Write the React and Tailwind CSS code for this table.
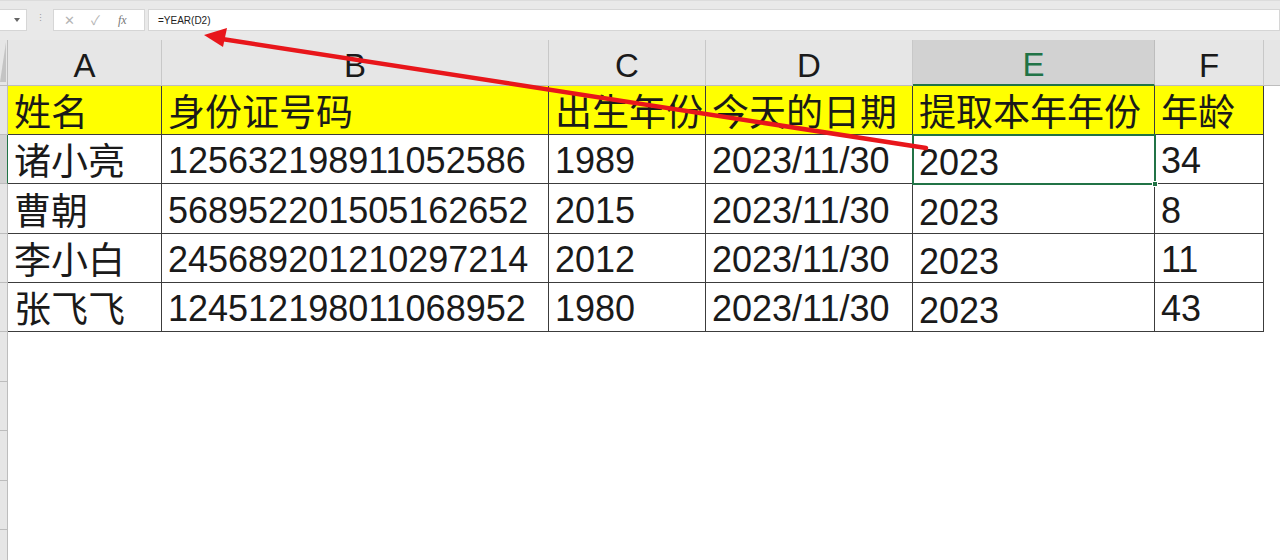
import React from "react";

const COLS = ["A", "B", "C", "D", "E", "F"];
const GRID = "grid grid-cols-[8px_154px_387px_157px_207px_242px_109px_16px]";

const header = ["姓名", "身份证号码", "出生年份", "今天的日期", "提取本年年份", "年龄"];
const rows = [
  ["诸小亮", "125632198911052586", "1989", "2023/11/30", "2023", "34"],
  ["曹朝", "568952201505162652", "2015", "2023/11/30", "2023", "8"],
  ["李小白", "245689201210297214", "2012", "2023/11/30", "2023", "11"],
  ["张飞飞", "124512198011068952", "1980", "2023/11/30", "2023", "43"],
];
const rowH = ["h-[49px]", "h-[50px]", "h-[49px]", "h-[49px]"];

function Cell({ children, cjk, className = "" }) {
  return (
    <div
      className={
        "flex items-end overflow-hidden whitespace-nowrap border-r border-b border-[#3c3c3c] pl-[6px] leading-none text-[#1a1a1a] " +
        (cjk ? "text-[37px] pb-[2px] " : "text-[36px] pb-[4px] ") +
        className
      }
    >
      {children}
    </div>
  );
}

export default function App() {
  return (
    <div className="relative h-[560px] w-[1280px] overflow-hidden bg-white font-['Liberation_Sans','Noto_Sans_CJK_SC',sans-serif]">
      {/* formula bar */}
      <div className="flex h-[40px] items-start bg-[#e9e9e9] pt-[8px] border-t border-[#dcdcdc]">
        <div className="flex h-[22px] w-[27px] items-center justify-end bg-white pr-[6px] border border-[#d6d6d6] border-l-0">
          <svg width="6" height="4" viewBox="0 0 6 4"><path d="M0 0h6L3 4z" fill="#666" /></svg>
        </div>
        <div className="flex w-[26px] justify-center pt-[5px] text-[9px] leading-none text-[#9a9a9a]">⋮</div>
        <div className="flex h-[22px] w-[92px] items-center bg-white border border-[#d6d6d6] text-[#b4b4b4]">
          <span className="ml-[10px] text-[13px] leading-none">✕</span>
          <span className="ml-[16px] text-[13px] leading-none">✓</span>
          <span className="ml-[18px] font-['Liberation_Serif',serif] italic text-[12px] leading-none text-[#777]">fx</span>
        </div>
        <div className="ml-[3px] flex h-[22px] flex-1 items-center bg-white pl-[9px] border border-[#d6d6d6] text-[10px] text-[#222]">
          =YEAR(D2)
        </div>
      </div>

      {/* column headers */}
      <div className={GRID + " h-[46px] bg-[#e6e6e6]"}>
        <div className="relative border-r border-b border-[#bdbdbd]">
          <div className="absolute left-0 top-[2px] h-[40px] w-[6px] bg-[#c4c4c4] [clip-path:polygon(100%_0,100%_100%,0_100%)]" />
        </div>
        {COLS.map((c) => (
          <div
            key={c}
            className={
              "flex items-end justify-center pb-[3px] text-[33px] leading-none border-r border-b " +
              (c === "E"
                ? "bg-[#d2d2d2] text-[#217346] border-r-[#bdbdbd] border-b-[#217346] border-b-2"
                : "text-[#1a1a1a] border-[#c8c8c8] border-b-[#bdbdbd]")
            }
          >
            {c}
          </div>
        ))}
        <div className="border-b border-[#bdbdbd]" />
      </div>

      {/* header row */}
      <div className={GRID + " h-[49px]"}>
        <div className="bg-[#e6e6e6] border-r border-b border-[#bdbdbd]" />
        {header.map((h, i) => (
          <Cell key={i} cjk className="bg-[#ffff00]">
            {h}
          </Cell>
        ))}
        <div />
      </div>

      {/* data rows */}
      {rows.map((r, ri) => (
        <div key={ri} className={GRID + " " + rowH[ri]}>
          <div
            className={
              "border-r border-b border-[#bdbdbd] " + (ri === 0 ? "bg-[#d2d2d2] border-r-[#217346]" : "bg-[#e6e6e6]")
            }
          />
          {r.map((v, ci) => (
            <Cell key={ci} cjk={ci === 0} className={ci === 4 ? "!pb-[2px]" : ""}>
              {v}
            </Cell>
          ))}
          <div />
        </div>
      ))}

      {/* empty rows */}
      {["h-[50px]", "h-[49px]", "h-[50px]", "h-[49px]", "h-[50px]"].map((h, i) => (
        <div key={i} className={GRID + " " + h}>
          <div className="bg-[#e6e6e6] border-r border-b border-[#bdbdbd]" />
        </div>
      ))}

      {/* selection */}
      <div className="pointer-events-none absolute left-[912px] top-[134px] h-[51px] w-[244px] border-2 border-[#217346]" />
      <div className="pointer-events-none absolute left-[1152px] top-[181px] h-[6px] w-[6px] bg-[#217346] border border-white" />

      {/* red arrow */}
      <svg className="pointer-events-none absolute left-0 top-0" width="1280" height="560">
        <line x1="926" y1="148" x2="222" y2="39" stroke="#e8161b" strokeWidth="4.5" strokeLinecap="round" />
        <polygon points="204,35 227,28 223,47" fill="#e8161b" />
      </svg>
    </div>
  );
}
